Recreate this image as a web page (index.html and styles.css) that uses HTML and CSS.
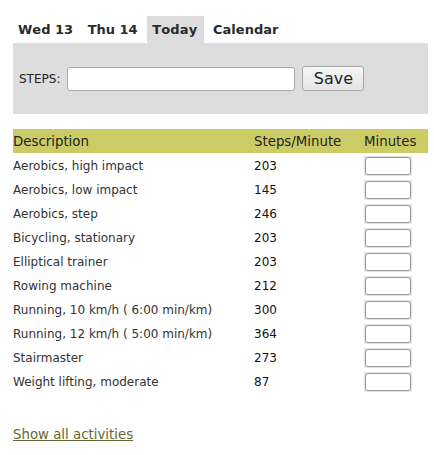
FILE: index.html
```html
<!DOCTYPE html>
<html>
<head>
<meta charset="utf-8">
<link rel="stylesheet" href="styles.css">
</head>
<body>
<div class="page">
  <div class="tabs"><span class="tab">Wed 13</span> <span class="tab">Thu 14</span> <span class="tab active">Today</span> <span class="tab">Calendar</span></div>
  <div class="panel">
    <label class="steps-label">STEPS:</label>
    <input class="steps-input" type="text">
    <button class="save">Save</button>
  </div>
  <table class="activities">
    <thead>
      <tr><th class="c-desc">Description</th><th class="c-steps">Steps/Minute</th><th class="c-min">Minutes</th></tr>
    </thead>
    <tbody>
      <tr><td>Aerobics, high impact</td><td class="num">203</td><td class="c-min"><span class="mwrap"><input class="min-input" type="text"></span></td></tr>
      <tr><td>Aerobics, low impact</td><td class="num">145</td><td class="c-min"><span class="mwrap"><input class="min-input" type="text"></span></td></tr>
      <tr><td>Aerobics, step</td><td class="num">246</td><td class="c-min"><span class="mwrap"><input class="min-input" type="text"></span></td></tr>
      <tr><td>Bicycling, stationary</td><td class="num">203</td><td class="c-min"><span class="mwrap"><input class="min-input" type="text"></span></td></tr>
      <tr><td>Elliptical trainer</td><td class="num">203</td><td class="c-min"><span class="mwrap"><input class="min-input" type="text"></span></td></tr>
      <tr><td>Rowing machine</td><td class="num">212</td><td class="c-min"><span class="mwrap"><input class="min-input" type="text"></span></td></tr>
      <tr><td>Running, 10 km/h ( 6:00 min/km)</td><td class="num">300</td><td class="c-min"><span class="mwrap"><input class="min-input" type="text"></span></td></tr>
      <tr><td>Running, 12 km/h ( 5:00 min/km)</td><td class="num">364</td><td class="c-min"><span class="mwrap"><input class="min-input" type="text"></span></td></tr>
      <tr><td>Stairmaster</td><td class="num">273</td><td class="c-min"><span class="mwrap"><input class="min-input" type="text"></span></td></tr>
      <tr><td>Weight lifting, moderate</td><td class="num">87</td><td class="c-min"><span class="mwrap"><input class="min-input" type="text"></span></td></tr>
    </tbody>
  </table>
  <a class="show-all" href="#">Show all activities</a>
</div>
</body>
</html>
```
FILE: styles.css
```css
html, body {
  margin: 0;
  padding: 0;
  background: #fff;
}
body {
  font-family: "DejaVu Sans", Verdana, sans-serif;
  color: #222;
}
.page {
  width: 415px;
  padding: 16px 0 0 13px;
}
.tabs {
  height: 27px;
  line-height: 28px;
  font-size: 13px;
  font-weight: bold;
  white-space: nowrap;
  color: #2a2a2a;
  font-kerning: none;
}
.tab {
  display: inline-block;
  padding: 0 5px;
  height: 27px;
}
.active {
  background: #dddddd;
  padding: 0 6px 0 5px;
  letter-spacing: 0.2px;
}
.panel {
  background: #dddddd;
  height: 71px;
  display: flex;
  align-items: center;
  padding: 0 6px;
  box-sizing: border-box;
}
.steps-label {
  font-size: 12px;
  color: #222;
  margin-right: 7px;
}
.steps-input {
  width: 228px;
  height: 24px;
  box-sizing: border-box;
  border: 1px solid #a8a8a8;
  border-radius: 3px;
  background: #fff;
  margin: 0;
  padding: 0 3px;
}
.save {
  margin: 0 0 0 7px;
  width: 62px;
  height: 25px;
  box-sizing: border-box;
  border: 1px solid #a8a8a8;
  border-radius: 3px;
  background: linear-gradient(#f6f6f6, #e4e4e4);
  font-family: "DejaVu Sans", sans-serif;
  font-size: 16px;
  color: #222;
  padding: 0;
  line-height: 21px;
}
.activities {
  margin-top: 15px;
  width: 415px;
  border-collapse: collapse;
  border-spacing: 0;
}
.activities th {
  background: #cccc66;
  height: 24px;
  padding: 1px 0 0;
  font-size: 13.33px;
  font-weight: normal;
  text-align: left;
  color: #222;
  box-sizing: border-box;
}
.c-desc { width: 241px; }
.c-steps { width: 110px; }
.activities td {
  height: 24px;
  padding: 1px 0 0;
  font-size: 12px;
  color: #333;
  box-sizing: border-box;
}
.activities td.num {
  color: #111;
}
.mwrap {
  display: inline-block;
  background: #e2e2e2;
  padding: 1px;
  width: 48px;
  height: 20px;
  box-sizing: border-box;
  vertical-align: middle;
}
.min-input {
  display: block;
  width: 46px;
  height: 18px;
  box-sizing: border-box;
  border: 1px solid #999;
  border-radius: 3px;
  background: #fff;
  margin: 0;
  padding: 0;
}
.show-all {
  display: inline-block;
  margin-top: 34px;
  font-size: 13.33px;
  color: #666633;
  text-decoration: underline;
}
```
